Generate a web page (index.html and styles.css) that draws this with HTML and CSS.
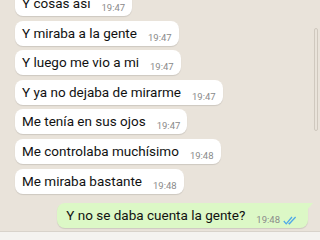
FILE: index.html
```html
<!DOCTYPE html>
<html lang="es">
<head>
  <meta charset="UTF-8">
  <meta name="viewport" content="width=device-width, initial-scale=1.0">
  <title>Chat</title>
  <link rel="stylesheet" href="styles.css">
</head>
<body>

<div class="chat">
  <!-- Messages -->
  <div class="messages">
    <div class="msg in first"><span class="text">Y cosas así</span><span class="time">19:47</span></div>
    <div class="msg in"><span class="text">Y miraba a la gente</span><span class="time">19:47</span></div>
    <div class="msg in"><span class="text">Y luego me vio a mi</span><span class="time">19:47</span></div>
    <div class="msg in"><span class="text">Y ya no dejaba de mirarme</span><span class="time">19:47</span></div>
    <div class="msg in"><span class="text">Me tenía en sus ojos</span><span class="time">19:47</span></div>
    <div class="msg in"><span class="text">Me controlaba muchísimo</span><span class="time">19:48</span></div>
    <div class="msg in"><span class="text">Me miraba bastante</span><span class="time">19:48</span></div>
    <div class="msg out">
      <span class="text">Y no se daba cuenta la gente?</span>
      <span class="time">19:48</span>
      <svg class="ticks" width="14" height="9" viewBox="0 0 14 9">
        <path d="M0.8 5 L3.2 7.8 L9 1" fill="none" stroke="#4fa8e8" stroke-width="1.3"/>
        <path d="M5.6 7 L6.4 7.8 L12.6 1" fill="none" stroke="#4fa8e8" stroke-width="1.3"/>
      </svg>
    </div>
  </div>

  <div class="scrollbar"></div>
</div>

<div class="input-bar"></div>

</body>
</html>
```

FILE: styles.css
```css
body {
  margin: 0;
  width: 320px;
  height: 240px;
  display: flex;
  flex-direction: column;
  overflow: hidden;
  font-family: Roboto, 'Noto Sans', sans-serif;
  background-color: #e9e3da;
  color: #111;
}

.chat {
  flex: 1;
  position: relative;
  overflow: hidden;
}

.messages {
  display: flex;
  flex-direction: column;
  align-items: flex-start;
  gap: 4.6px;
  padding: 0 12px 0 15px;
}

.msg {
  display: flex;
  align-items: flex-end;
  height: 25px;
  box-sizing: border-box;
  padding: 0 7px 3px 7px;
  background: #fff;
  border-radius: 8px;
  box-shadow: 0 1px 1px rgba(0, 0, 0, 0.12);
  position: relative;
}

.msg.first {
  margin-top: -9px;
}

.text {
  font-size: 13.5px;
  line-height: 17px;
  padding-bottom: 1px;
}

.time {
  font-size: 9.5px;
  line-height: 10px;
  color: #8a8a8a;
  margin-left: 11px;
}

.msg.out {
  align-self: flex-end;
  margin-top: 5px;
  background: #dcf8c6;
  border-top-right-radius: 0;
  padding-right: 11px;
  padding-left: 9px;
}

/* bubble tail */
.msg.out:after {
  content: "";
  position: absolute;
  top: 0;
  right: -5px;
  border-top: 7px solid #dcf8c6;
  border-right: 6px solid transparent;
}

.ticks {
  margin-left: 3px;
  margin-bottom: 0;
}

.scrollbar {
  position: absolute;
  right: 2px;
  top: 28px;
  width: 2px;
  height: 101px;
  border: 1px solid #cfc8be;
  border-radius: 2px;
}

.input-bar {
  height: 8px;
  background: #f4f3f0;
  border-top: 1px solid #d8d3cb;
}
```
